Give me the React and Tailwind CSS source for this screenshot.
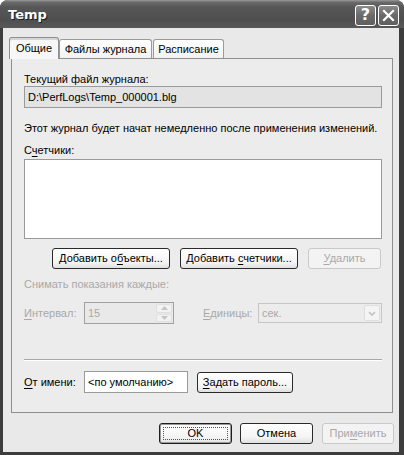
import React from "react";

const font = { fontFamily: '"Liberation Sans", Arial, sans-serif' };

function U({ children }) {
  return <span className="underline decoration-1 underline-offset-[2px]">{children}</span>;
}

function Btn({ children, w, disabled, def, className = "" }) {
  return (
    <div
      className={
        "h-[21px] rounded-[3px] border flex items-center justify-center relative text-[11px] leading-[13px] " +
        (disabled
          ? "border-[#c9c9c9] bg-[#f3f3f3] text-[#a9a9a9] "
          : def
          ? "border-[#1e1e1e] bg-[linear-gradient(180deg,#ffffff_0%,#f4f4f4_70%,#e2e2e2_100%)] text-black shadow-[inset_0_0_0_1px_#9a9a9a] "
          : "border-[#2a2a2a] bg-[linear-gradient(180deg,#ffffff_0%,#f4f4f4_70%,#e0e0e0_100%)] text-black ") +
        className
      }
      style={{ width: w }}
    >
      {def && <div className="absolute inset-[3px] border border-dotted border-[#555]" />}
      <span className="relative">{children}</span>
    </div>
  );
}

export default function App() {
  return (
    <div className="w-[404px] h-[455px] bg-white" style={font}>
      <div className="w-full h-full flex flex-col bg-[#3d3d3d] rounded-t-[8px] overflow-hidden">
        {/* Title bar */}
        <div className="h-[28px] shrink-0 flex items-center justify-between pl-[8px] pr-[5px] bg-[linear-gradient(180deg,#9a9a9a_0%,#6a6a6a_8%,#575757_25%,#4f4f4f_70%,#585858_100%)]">
          <span
            className="text-white font-bold text-[14px] leading-[16px] mt-[1px]"
            style={{ fontFamily: '"DejaVu Sans", sans-serif', fontSize: 13, textShadow: "1px 1px 0 #1a1a1a" }}
          >
            Temp
          </span>
          <div className="flex gap-[2px] mt-[2px]">
            <div className="w-[21px] h-[21px] rounded-[3px] border border-white bg-[linear-gradient(180deg,#8a8a8a_0%,#6a6a6a_50%,#5f5f5f_100%)] flex items-center justify-center">
              <span className="text-white font-bold text-[16px] leading-none" style={{ fontFamily: '"DejaVu Sans", sans-serif' }}>?</span>
            </div>
            <div className="w-[21px] h-[21px] rounded-[3px] border border-white bg-[linear-gradient(180deg,#8a8a8a_0%,#6a6a6a_50%,#5f5f5f_100%)] flex items-center justify-center">
              <svg width="13" height="13" viewBox="0 0 13 13">
                <path d="M2 2 L11 11 M11 2 L2 11" stroke="white" strokeWidth="2.2" strokeLinecap="square" />
              </svg>
            </div>
          </div>
        </div>

        {/* Body */}
        <div className="flex-1 ml-[3px] mr-[5px] mb-[3px] bg-[#e9e9e9] flex flex-col">
          {/* Tabs */}
          <div className="mt-[9px] ml-[6px] h-[21px] flex items-end relative z-10 text-[11px] leading-[13px] text-black">
            <div className="w-[50px] h-[22px] -mb-[1px] border border-b-0 border-[#8f8f8f] rounded-t-[3px] bg-[#f7f7f7] flex items-start justify-center pt-[4px] shadow-[inset_0_2px_0_#d6d6d6]">
              Общие
            </div>
            <div className="w-[93px] h-[19px] border border-b-0 border-[#9a9a9a] rounded-t-[3px] bg-[linear-gradient(180deg,#ffffff_0%,#f2f2f2_100%)] flex items-start justify-center pt-[3px]">
              Файлы журнала
            </div>
            <div className="w-[71px] h-[19px] ml-[1px] border border-b-0 border-[#9a9a9a] rounded-t-[3px] bg-[linear-gradient(180deg,#ffffff_0%,#f2f2f2_100%)] flex items-start justify-center pt-[3px]">
              Расписание
            </div>
          </div>

          {/* Panel */}
          <div className="ml-[8px] w-[382px] h-[355px] border border-[#8f8f8f] bg-[#ececec] pl-[12px] pr-[10px] pt-[14px] flex flex-col text-[11px] leading-[13px] text-black">
            <div>Текущий файл журнала:</div>
            <div className="h-[22px] border border-[#9a9a9a] bg-[#e3e3e3] flex items-center pl-[3px]">
              D:\PerfLogs\Temp_000001.blg
            </div>
            <div className="mt-[14px]">Этот журнал будет начат немедленно после применения изменений.</div>
            <div className="mt-[9px]">
              С<U>ч</U>етчики:
            </div>
            <div className="mt-[2px] h-[80px] border border-[#9a9a9a] bg-white" />
            <div className="mt-[9px] flex justify-end gap-[10px] pr-[1px]">
              <Btn w={118}>
                Добавить о<U>б</U>ъекты...
              </Btn>
              <Btn w={118}>
                Добавить <U>с</U>четчики...
              </Btn>
              <Btn w={73} disabled>
                <U>У</U>далить
              </Btn>
            </div>
            <div className="mt-[9px] text-[#a9a9a9]">Снимать показания каждые:</div>
            <div className="mt-[11px] h-[22px] flex items-center text-[#a9a9a9]">
              <div className="w-[60px]">
                <U>И</U>нтервал:
              </div>
              <div className="w-[90px] h-[22px] border border-[#a0a0a0] bg-[#e9e9e9] flex items-center justify-between pl-[3px] pr-[1px]">
                <span>15</span>
                <div className="w-[16px] h-[18px] flex flex-col gap-[1px]">
                  <div className="flex-1 rounded-[2px] bg-[#f2f2f2] border border-[#e0e0e0] flex items-center justify-center">
                    <svg width="7" height="4" viewBox="0 0 7 4"><path d="M0 4 L3.5 0 L7 4 Z" fill="#c4c4c4" /></svg>
                  </div>
                  <div className="flex-1 rounded-[2px] bg-[#f2f2f2] border border-[#e0e0e0] flex items-center justify-center">
                    <svg width="7" height="4" viewBox="0 0 7 4"><path d="M0 0 L3.5 4 L7 0 Z" fill="#c4c4c4" /></svg>
                  </div>
                </div>
              </div>
              <div className="ml-[29px] w-[55px]">
                <U>Е</U>диницы:
              </div>
              <div className="w-[124px] h-[20px] border border-[#c6c6c6] bg-[#ececec] flex items-center justify-between pl-[3px] pr-[1px]">
                <span>сек.</span>
                <div className="w-[16px] h-[16px] rounded-[2px] bg-[#f4f4f4] border border-[#dedede] flex items-center justify-center">
                  <svg width="8" height="5" viewBox="0 0 8 5"><path d="M1 1 L4 4 L7 1" stroke="#c0c0c0" strokeWidth="1.6" fill="none" /></svg>
                </div>
              </div>
            </div>
            <div className="mt-[35px] h-[2px] border-t border-[#a8a8a8] border-b border-b-white" />
            <div className="mt-[10px] h-[22px] flex items-center">
              <div className="w-[60px]">
                <U>О</U>т имени:
              </div>
              <div className="w-[104px] h-[22px] border border-[#9a9a9a] bg-white flex items-center pl-[3px]">
                &lt;по умолчанию&gt;
              </div>
              <Btn w={96} className="ml-[9px]">
                <U>З</U>адать пароль...
              </Btn>
            </div>
          </div>

          {/* Bottom buttons */}
          <div className="mt-[10px] flex justify-end gap-[8px] pr-[5px]">
            <Btn w={73} def>
              OK
            </Btn>
            <Btn w={73}>Отмена</Btn>
            <Btn w={72} disabled className="ml-[1px]">
              При<U>м</U>енить
            </Btn>
          </div>
        </div>
      </div>
    </div>
  );
}
